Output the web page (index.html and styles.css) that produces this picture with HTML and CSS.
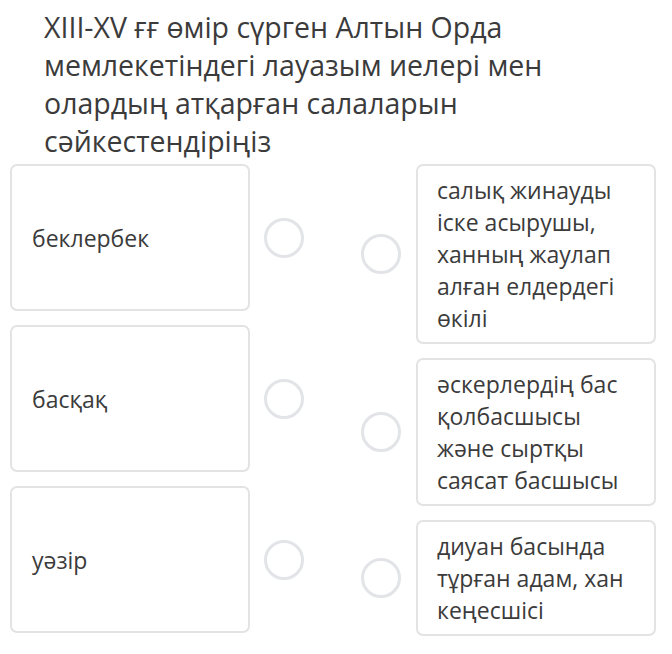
FILE: index.html
```html
<html lang="kk">
<head>
    <meta charset="utf-8">
    <link rel="stylesheet" href="styles.css">
</head>
<body>
    <h1 class="question">XIII-XV ғғ өмір сүрген Алтын Орда мемлекетіндегі лауазым иелері мен олардың атқарған салаларын сәйкестендіріңіз</h1>
    <div class="match">
        <div class="column">
            <div class="row left">
                <div class="card">беклербек</div>
                <span class="dot"></span>
            </div>
            <div class="row left">
                <div class="card">басқақ</div>
                <span class="dot"></span>
            </div>
            <div class="row left">
                <div class="card">уәзір</div>
                <span class="dot"></span>
            </div>
        </div>
        <div class="column">
            <div class="row right">
                <span class="dot"></span>
                <div class="card">салық жинауды іске асырушы, ханның жаулап алған елдердегі өкілі</div>
            </div>
            <div class="row right">
                <span class="dot"></span>
                <div class="card">әскерлердің бас қолбасшысы және сыртқы саясат басшысы</div>
            </div>
            <div class="row right">
                <span class="dot"></span>
                <div class="card">диуан басында тұрған адам, хан кеңесшісі</div>
            </div>
        </div>
    </div>
</body>
</html>
```
FILE: styles.css
```css
body {
    font-family: "Open Sans", "DejaVu Sans", sans-serif;
    background-color: #fff;
    color: #3b3b3b;
    margin: 0;
    padding: 0 16px 0 10px;
}
.question {
    font-size: 28.5px;
    font-weight: normal;
    line-height: 38px;
    margin: 8px 0 0 34px;
    width: 540px;
}
.match {
    display: flex;
    justify-content: space-between;
    margin-top: 4px;
}
.column {
    display: flex;
    flex-direction: column;
    gap: 14px;
}
.row {
    display: flex;
    align-items: center;
}
.left {
    gap: 14px;
}
.right {
    gap: 15px;
}
.card {
    box-sizing: border-box;
    width: 240px;
    border: 2px solid #e3e3e3;
    border-radius: 7px;
    font-size: 23px;
    line-height: 32px;
}
.left .card {
    min-height: 147px;
    padding: 0 20px;
    display: flex;
    align-items: center;
}
.right .card {
    padding: 8px 19px;
}
.dot {
    box-sizing: border-box;
    width: 40px;
    height: 40px;
    border: 3px solid #e2e4e7;
    border-radius: 50%;
}
```
